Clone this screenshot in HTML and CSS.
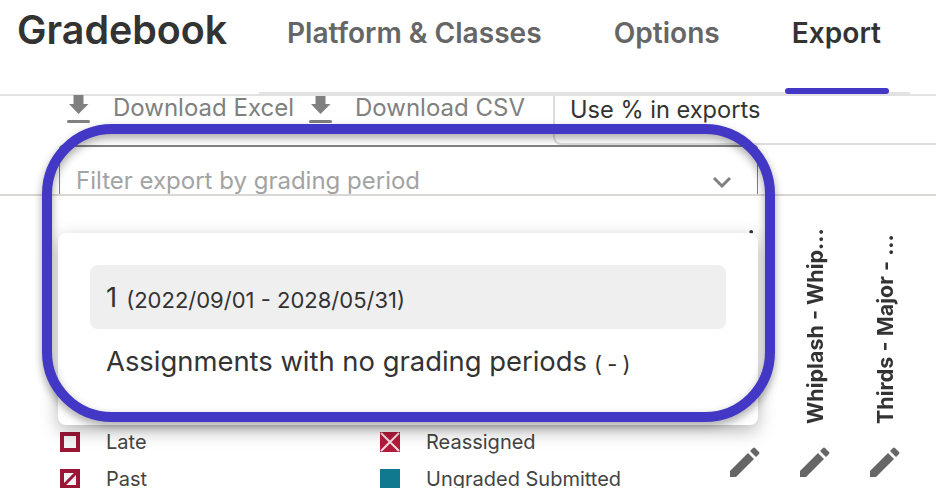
FILE: index.html
```html
<!DOCTYPE html>
<html lang="en">
<head>
<meta charset="utf-8">
<title>Gradebook</title>
<link rel="stylesheet" href="styles.css">
</head>
<body>
<div class="page">
  <header class="header">
    <h1 class="title">Gradebook</h1>
    <nav class="tabs">
      <a class="tab tab-platform">Platform &amp; Classes</a>
      <a class="tab tab-options">Options</a>
      <a class="tab tab-export">Export</a>
    </nav>
  </header>
  <section class="toolbar">
    <a class="download download-excel">
      <svg class="dl-icon" viewBox="0 0 23 28"><path d="M6.500 0h10v9h5L11.500 19 2 9h4.500z"/><rect x="0" y="25" width="23" height="3" rx="1.500"/></svg>
      <span>Download Excel</span>
    </a>
    <a class="download download-csv">
      <svg class="dl-icon" viewBox="0 0 23 28"><path d="M6.500 0h10v9h5L11.500 19 2 9h4.500z"/><rect x="0" y="25" width="23" height="3" rx="1.500"/></svg>
      <span>Download CSV</span>
    </a>
    <div class="percent">Use % in exports</div>
  </section>
  <section class="filter-row">
    <div class="filter">
      <span class="placeholder">Filter export by grading period</span>
      <svg class="chevron" viewBox="0 0 20 12"><path d="M2 2l8 8 8-8" fill="none" stroke="#808080" stroke-width="3"/></svg>
    </div>
  </section>
  <main class="grid-area">
    <div class="legend">
      <div class="legend-item"><span class="sw sw-late"></span><span>Late</span></div>
      <div class="legend-item"><span class="sw sw-x"><svg viewBox="0 0 20 20"><path d="M1 1l18 18M19 1L1 19" stroke="#f0dfe2" stroke-width="2"/></svg></span><span>Reassigned</span></div>
      <div class="legend-item"><span class="sw sw-past"><svg viewBox="0 0 12 12"><path d="M12 0L0 12" stroke="#9b1536" stroke-width="3"/></svg></span><span>Past</span></div>
      <div class="legend-item"><span class="sw sw-teal"></span><span>Ungraded Submitted</span></div>
    </div>
    <div class="cols">
      <div class="col"><span class="col-name">Whiplash - Whip...</span><svg class="pencil" viewBox="0 0 30 30"><path d="M0 24L18 6l6 6L6 30H0zM20 4l3-3q1-1 2 0l4 4q1 1 0 2l-3 3z"/></svg></div>
      <div class="col"><span class="col-name">Whiplash - Whip...</span><svg class="pencil" viewBox="0 0 30 30"><path d="M0 24L18 6l6 6L6 30H0zM20 4l3-3q1-1 2 0l4 4q1 1 0 2l-3 3z"/></svg></div>
      <div class="col"><span class="col-name">Thirds - Major - ...</span><svg class="pencil" viewBox="0 0 30 30"><path d="M0 24L18 6l6 6L6 30H0zM20 4l3-3q1-1 2 0l4 4q1 1 0 2l-3 3z"/></svg></div>
    </div>
  </main>
  <div class="menu">
    <div class="option option-active"><span class="opt-main">1</span> <span class="opt-sub">(2022/09/01 - 2028/05/31)</span></div>
    <div class="option"><span class="opt-main">Assignments with no grading periods</span> <span class="opt-sub opt-empty">( - )</span></div>
  </div>
  <div class="ring"></div>
</div>
</body>
</html>
```
FILE: styles.css
```css
* { box-sizing: border-box; }
html, body { margin: 0; padding: 0; background: #fff; }
body { font-family: Inter, "Liberation Sans", sans-serif; color: #333; }
.page { position: relative; width: 936px; height: 488px; overflow: hidden; }

.header { height: 96px; display: flex; align-items: flex-start; border-bottom: 2px solid #e2e2e2; }
.title { margin: 7px 0 0 17px; width: 242px; font-size: 39.4px; line-height: 46px; font-weight: 600; color: #333; white-space: nowrap; }
.tabs { position: relative; display: flex; width: 651px; height: 96px; border-bottom: 4px solid #e2e2e2; }
.tab { font-size: 28.1px; line-height: 34px; font-weight: 600; color: #666; margin-top: 16px; white-space: nowrap; }
.tab-platform { margin-left: 28px; }
.tab-options { margin-left: 72px; }
.tab-export { margin-left: 72px; color: #333; position: relative; }
.tab-export::after { content: ""; position: absolute; left: -7px; right: -8px; top: 72px; height: 6px; border-radius: 3px; background: #4338c6; }

.toolbar { height: 49px; display: flex; align-items: flex-start; }
.download { display: flex; align-items: flex-start; color: #808080; font-size: 24px; line-height: 28px; margin-top: -1px; flex: none; }
.download span { margin-top: -1px; margin-left: 23px; white-space: nowrap; }
.download-excel { margin-left: 67px; width: 242px; }
.download-csv { width: 244px; }
.dl-icon { width: 23px; height: 28px; fill: #808080; display: block; flex: none; }
.percent { flex: 1; height: 49px; border-left: 2px solid #ddd; border-bottom: 2px solid #ddd; border-bottom-left-radius: 8px; padding-left: 15px; font-size: 23.6px; line-height: 27px; color: #333; }

.filter-row { height: 51px; border-bottom: 2px solid #d9d6d3; padding-left: 59px; }
.filter { width: 699px; height: 49px; border: 1px solid #808080; border-width: 2px 1px 0; border-radius: 4px 4px 0 0; display: flex; align-items: center; justify-content: space-between; padding: 0 25px 0 16px; }
.placeholder { font-size: 24px; line-height: 28px; color: #a3a3a3; margin-top: 20px; }
.chevron { width: 20px; height: 12px; margin-top: 23px; }

.grid-area { position: relative; height: 292px; display: flex; }
.legend { position: absolute; left: 60px; top: 236px; width: 640px; display: grid; grid-template-columns: 320px 320px; row-gap: 17px; }
.legend-item { display: flex; align-items: center; gap: 26px; font-size: 20px; line-height: 20px; color: #444; white-space: nowrap; }
.sw { width: 20px; height: 20px; flex: none; display: block; }
.sw svg { display: block; width: 100%; height: 100%; }
.sw-late { border: 4px solid #9b1536; background: #f4f4f4; }
.sw-past { border: 4px solid #9b1536; background: #f4f4f4; }
.sw-x { background: #b31b3c; }
.sw-teal { background: #10788f; }

.cols { margin-left: auto; margin-right: 35px; display: flex; gap: 38px; height: 292px; }
.col { width: 32px; display: flex; flex-direction: column; align-items: center; }
.col-name { writing-mode: vertical-rl; transform: rotate(180deg); height: 197px; margin-top: 31px; font-size: 21.5px; line-height: 32px; font-weight: 700; color: #333; white-space: nowrap; overflow: hidden; }
.pencil { width: 30px; height: 30px; fill: #666; margin-top: 23px; flex: none; }

.menu { position: absolute; left: 58px; top: 233px; width: 700px; height: 192px; background: #fff; border-radius: 8px; box-shadow: 0 6px 18px rgba(0,0,0,.28); padding: 32px; }
.option { height: 64px; padding: 0 16px; display: flex; align-items: center; gap: 9px; border-radius: 8px; white-space: nowrap; color: #333; }
.option-active { background: #efefef; }
.opt-main { font-size: 27.4px; line-height: 34px; }
.opt-sub { font-size: 22px; line-height: 28px; margin-top: 5px; }
.opt-empty { margin-left: -2px; word-spacing: -1px; }
.ring { position: absolute; left: 42px; top: 124px; width: 733px; height: 298px; border: 10px solid #4338c6; border-radius: 70px; filter: drop-shadow(0 4px 4px rgba(0,0,0,.35)); }
```
